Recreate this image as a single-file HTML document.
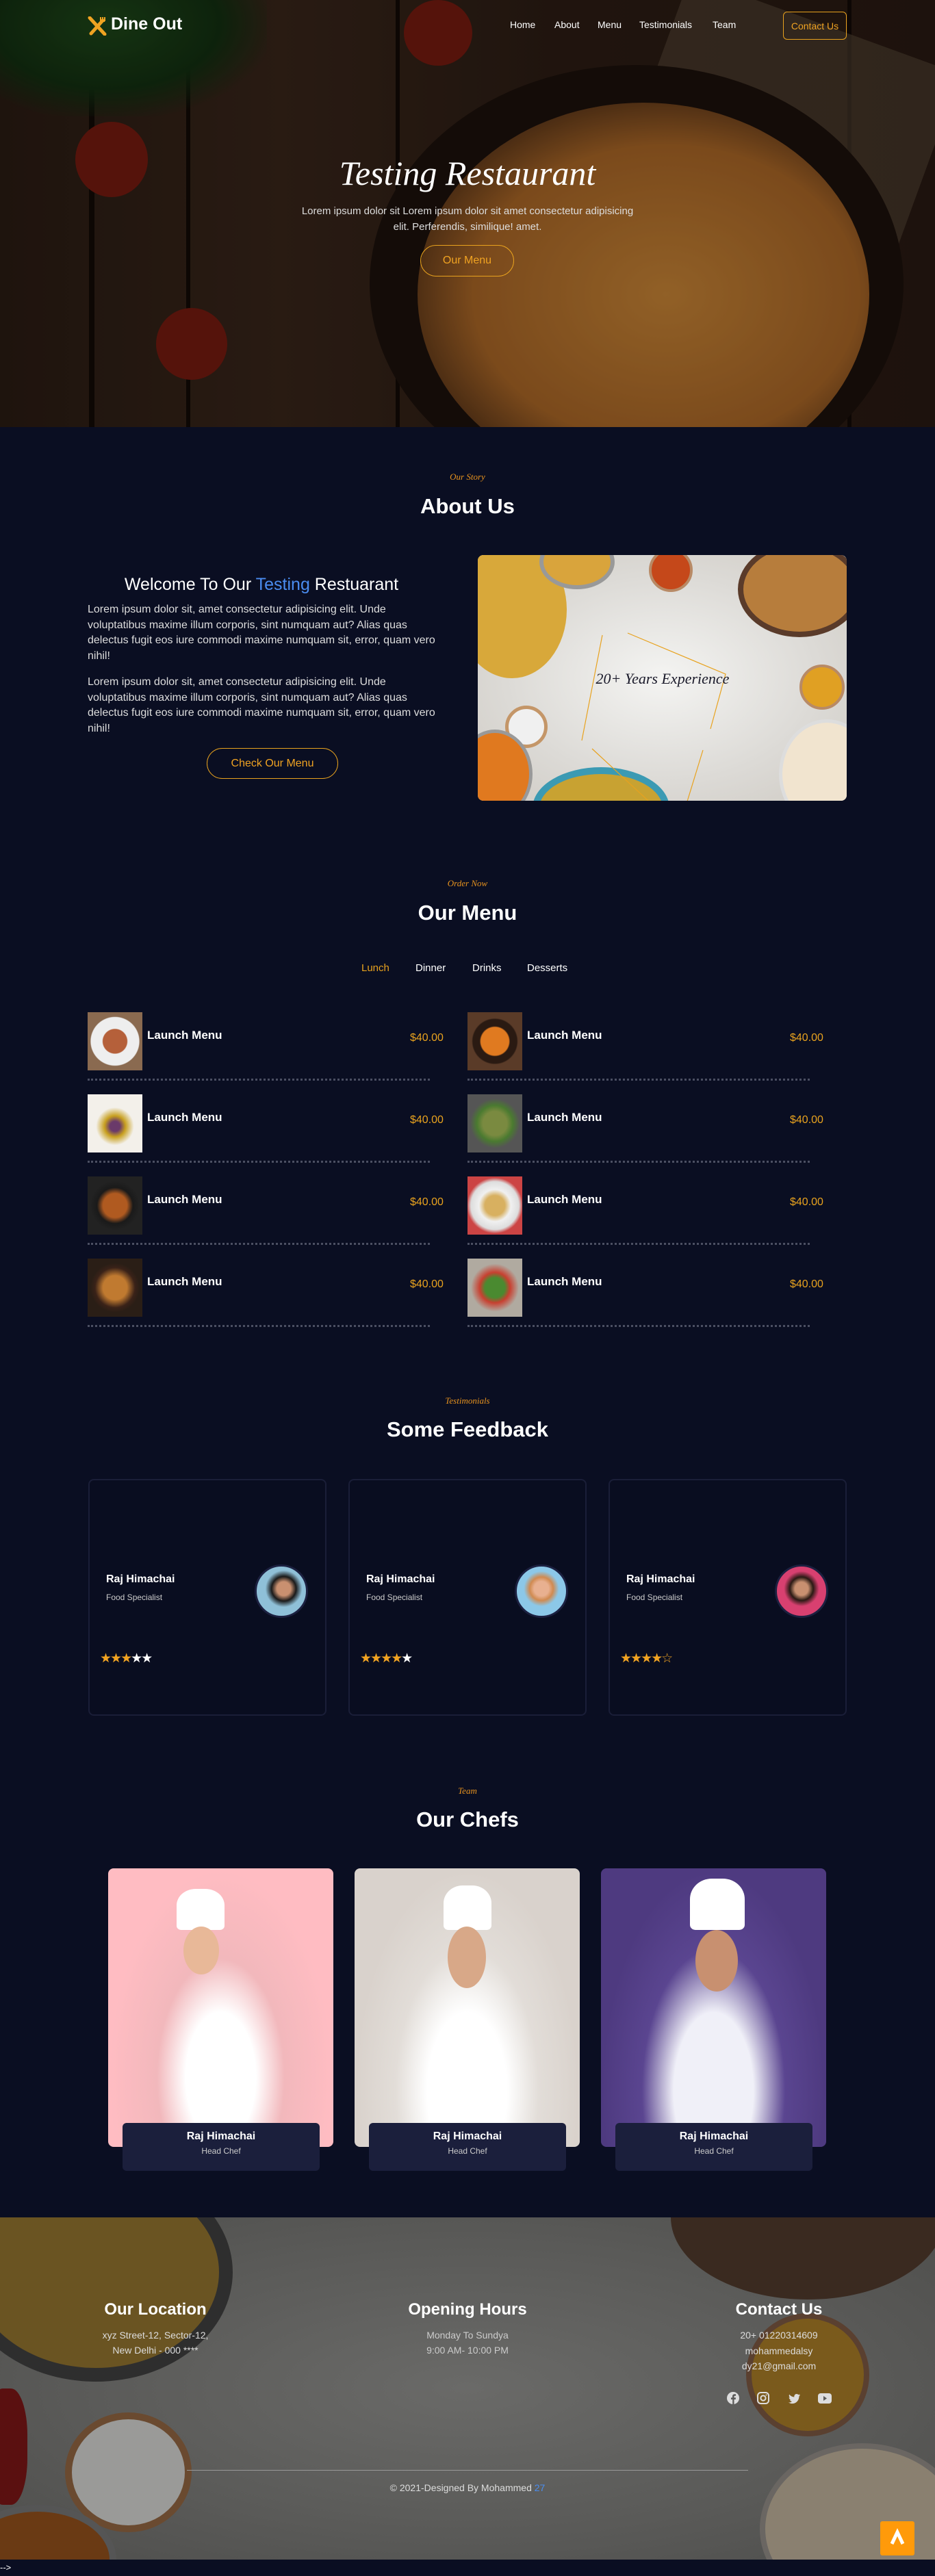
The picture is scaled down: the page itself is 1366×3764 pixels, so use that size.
<!DOCTYPE html>
<html><head><meta charset="utf-8"><style>
*{margin:0;padding:0;box-sizing:border-box}
body{width:1366px;height:3764px;background:#0a0e22;font-family:"Liberation Sans",sans-serif;color:#fff;position:relative;overflow:hidden}
.a{position:absolute}
.c{text-align:center}
.script{font-family:"Liberation Serif",serif;font-style:italic;color:#e8931e}
.h2{font-size:31px;font-weight:600;width:1366px;left:0;text-align:center}
.sub{font-size:13px;width:1366px;left:0;text-align:center}
.btn{border:1px solid #e8a21e;color:#f0a322;border-radius:24px;display:flex;align-items:center;justify-content:center}
.mi{width:80px;height:85px}
.mt{font-size:17px;font-weight:600}
.mp{font-size:16px;color:#e8a21e}
.dl{height:0;border-top:3px dotted #4b4f62;width:500px}
.card{width:348px;height:346px;border:2px solid #1a1e38;border-radius:8px;background:#090d20}
.av{width:78px;height:78px;border-radius:50%;border:3px solid #1c2040}
.st{font-size:19px;letter-spacing:-2px}
.chef{width:329px;height:407px;border-radius:8px;overflow:hidden}
.nb{width:288px;height:70px;background:#1b1f3c;border-radius:6px;text-align:center}
</style></head><body>

<!-- HERO -->
<div class="a" style="left:0;top:0;width:1366px;height:624px;background:linear-gradient(90deg,#2c1d14,#3b271b 30%,#2e1e15 60%,#2a1b13);overflow:hidden">
  <div class="a" style="left:130px;top:0;width:8px;height:624px;background:#130b07"></div>
  <div class="a" style="left:272px;top:0;width:6px;height:624px;background:#130b07"></div>
  <div class="a" style="left:578px;top:0;width:6px;height:624px;background:#130b07"></div>
  <div class="a" style="left:1238px;top:0;width:6px;height:624px;background:#130b07"></div>
  <div class="a" style="left:900px;top:20px;width:420px;height:560px;background:#5a4a38;transform:rotate(20deg);opacity:.6"></div>
  <div class="a" style="left:540px;top:95px;width:780px;height:640px;border-radius:50%;background:#1e120c"></div>
  <div class="a" style="left:610px;top:150px;width:660px;height:560px;border-radius:50%;background:radial-gradient(ellipse at 55% 50%,#d08a38,#b06a28 55%,#3a2214 85%)"></div>
  <div class="a" style="left:110px;top:178px;width:106px;height:110px;border-radius:50%;background:#7a1c10"></div>
  <div class="a" style="left:590px;top:0;width:100px;height:96px;border-radius:50%;background:#7a1c10"></div>
  <div class="a" style="left:228px;top:450px;width:104px;height:105px;border-radius:50%;background:#7a1c10"></div>
  <div class="a" style="left:0;top:0;width:390px;height:170px;background:radial-gradient(ellipse at 40% 20%,#1f4a1a,#143212 50%,transparent 75%)"></div>
</div>
<div class="a" style="left:0;top:0;width:1366px;height:624px;background:rgba(0,0,0,.3)"></div>

<svg class="a" style="left:128px;top:24px" width="28" height="28" viewBox="0 0 28 28"><path d="M3 2 L25 26" stroke="#f0a322" stroke-width="5" stroke-linecap="round"/><path d="M22 6 L5 25" stroke="#f0a322" stroke-width="5" stroke-linecap="round"/><path d="M19 1v6M22 1v6M25 1v6M19 7h6" stroke="#f0a322" stroke-width="2"/></svg>
<div class="a" style="left:162px;top:21px;font-size:25px;font-weight:700">Dine Out</div>
<div class="a" style="left:745px;top:28px;font-size:14px">Home</div>
<div class="a" style="left:810px;top:28px;font-size:14px">About</div>
<div class="a" style="left:873px;top:28px;font-size:14px">Menu</div>
<div class="a" style="left:934px;top:28px;font-size:14px">Testimonials</div>
<div class="a" style="left:1041px;top:28px;font-size:14px">Team</div>
<div class="a btn" style="left:1144px;top:17px;width:93px;height:41px;border-radius:6px;font-size:14px">Contact Us</div>

<div class="a c" style="left:0;top:224px;width:1366px;font-family:'Liberation Serif',serif;font-style:italic;font-size:50px">Testing Restaurant</div>
<div class="a c" style="left:403px;top:297px;width:560px;font-size:15px;line-height:23px;color:#ddd">Lorem ipsum dolor sit Lorem ipsum dolor sit amet consectetur adipisicing<br>elit. Perferendis, similique! amet.</div>
<div class="a btn" style="left:614px;top:358px;width:137px;height:46px;font-size:16px">Our Menu</div>

<!-- ABOUT -->
<div class="a script sub" style="top:689px">Our Story</div>
<div class="a h2" style="top:722px">About Us</div>
<div class="a c" style="left:128px;top:840px;width:508px;font-size:25px">Welcome To Our <span style="color:#4a8cf0">Testing</span> Restuarant</div>
<div class="a" style="left:128px;top:880px;width:510px;font-size:16px;line-height:22.6px;color:#ddd">Lorem ipsum dolor sit, amet consectetur adipisicing elit. Unde voluptatibus maxime illum corporis, sint numquam aut? Alias quas delectus fugit eos iure commodi maxime numquam sit, error, quam vero nihil!</div>
<div class="a" style="left:128px;top:986px;width:510px;font-size:16px;line-height:22.6px;color:#ddd">Lorem ipsum dolor sit, amet consectetur adipisicing elit. Unde voluptatibus maxime illum corporis, sint numquam aut? Alias quas delectus fugit eos iure commodi maxime numquam sit, error, quam vero nihil!</div>
<div class="a btn" style="left:302px;top:1093px;width:192px;height:45px;font-size:16px">Check Our Menu</div>
<div class="a" style="left:698px;top:811px;width:539px;height:359px;border-radius:8px;overflow:hidden;background:radial-gradient(ellipse at 50% 50%,#f4f4f2,#dcdad6 60%,#cfcbc4)">
  <div class="a" style="left:-30px;top:-20px;width:160px;height:200px;border-radius:50%;background:#d8a83a"></div>
  <div class="a" style="left:90px;top:-30px;width:110px;height:80px;border-radius:50%;background:#d9a43c;border:6px solid #999"></div>
  <div class="a" style="left:250px;top:-10px;width:64px;height:64px;border-radius:50%;background:#c5481a;border:4px solid #b88a66"></div>
  <div class="a" style="left:380px;top:-20px;width:180px;height:140px;border-radius:50%;background:#b77d3c;border:8px solid #5a3b2a"></div>
  <div class="a" style="left:470px;top:160px;width:66px;height:66px;border-radius:50%;background:#e0a023;border:4px solid #b88a66"></div>
  <div class="a" style="left:40px;top:220px;width:62px;height:62px;border-radius:50%;background:#f0f0f0;border:5px solid #c49668"></div>
  <div class="a" style="left:-30px;top:255px;width:110px;height:130px;border-radius:50%;background:#e0791f;border:5px solid #999"></div>
  <div class="a" style="left:80px;top:310px;width:200px;height:120px;border-radius:50%;background:#c8a232;border:10px solid #3b9ab3"></div>
  <div class="a" style="left:440px;top:240px;width:140px;height:160px;border-radius:50%;background:#f1e4cf;border:5px solid #ddd"></div>
  <svg class="a" style="left:0;top:0" width="539" height="359"><path d="M219 114 L362 174 L340 254 M329 285 L306 360 M276 384 L167 283 M152 271 L182 117" fill="none" stroke="#e8a21e" stroke-width="1.2"/></svg>
  <div class="a c" style="left:150px;top:168px;width:240px;font-family:'Liberation Serif',serif;font-style:italic;font-size:22px;color:#1a1a2a">20+ Years Experience</div>
</div>

<!-- MENU -->
<div class="a script sub" style="top:1283px">Order Now</div>
<div class="a h2" style="top:1316px">Our Menu</div>
<div class="a" style="left:528px;top:1406px;font-size:15px;color:#e8a21e">Lunch</div>
<div class="a" style="left:607px;top:1406px;font-size:15px">Dinner</div>
<div class="a" style="left:690px;top:1406px;font-size:15px">Drinks</div>
<div class="a" style="left:770px;top:1406px;font-size:15px">Desserts</div>

<div class="a mi" style="left:128px;top:1479px;background:radial-gradient(circle,#b5603a 30%,#eee 32%,#eee 60%,#8a6a50 62%)"></div>
<div class="a mi" style="left:683px;top:1479px;background:radial-gradient(circle,#e07a20 35%,#2a1a12 38%,#2a1a12 55%,#5a3b28 58%)"></div>
<div class="a mi" style="left:128px;top:1599px;background:radial-gradient(circle at 50% 55%,#6a3a6a 12%,#c8a020 25%,#f3f0ea 45%)"></div>
<div class="a mi" style="left:683px;top:1599px;background:radial-gradient(circle,#7a8a40 30%,#4a7a30 45%,#555 62%)"></div>
<div class="a mi" style="left:128px;top:1719px;background:radial-gradient(circle,#b05a20 30%,#1a1a1a 45%,#222 62%)"></div>
<div class="a mi" style="left:683px;top:1719px;background:radial-gradient(circle,#d8b060 25%,#f0f0f0 40%,#ddd 60%,#c44 70%)"></div>
<div class="a mi" style="left:128px;top:1839px;background:radial-gradient(circle,#c07a30 30%,#3a2218 50%,#2a1e16 62%)"></div>
<div class="a mi" style="left:683px;top:1839px;background:radial-gradient(circle,#4a8a30 25%,#c84030 38%,#b0aaa0 60%)"></div>

<div class="a mt" style="left:215px;top:1503px">Launch Menu</div><div class="a mp" style="left:599px;top:1508px">$40.00</div>
<div class="a mt" style="left:770px;top:1503px">Launch Menu</div><div class="a mp" style="left:1154px;top:1508px">$40.00</div>
<div class="a mt" style="left:215px;top:1623px">Launch Menu</div><div class="a mp" style="left:599px;top:1628px">$40.00</div>
<div class="a mt" style="left:770px;top:1623px">Launch Menu</div><div class="a mp" style="left:1154px;top:1628px">$40.00</div>
<div class="a mt" style="left:215px;top:1743px">Launch Menu</div><div class="a mp" style="left:599px;top:1748px">$40.00</div>
<div class="a mt" style="left:770px;top:1743px">Launch Menu</div><div class="a mp" style="left:1154px;top:1748px">$40.00</div>
<div class="a mt" style="left:215px;top:1863px">Launch Menu</div><div class="a mp" style="left:599px;top:1868px">$40.00</div>
<div class="a mt" style="left:770px;top:1863px">Launch Menu</div><div class="a mp" style="left:1154px;top:1868px">$40.00</div>

<div class="a dl" style="left:128px;top:1576px"></div><div class="a dl" style="left:683px;top:1576px"></div>
<div class="a dl" style="left:128px;top:1696px"></div><div class="a dl" style="left:683px;top:1696px"></div>
<div class="a dl" style="left:128px;top:1816px"></div><div class="a dl" style="left:683px;top:1816px"></div>
<div class="a dl" style="left:128px;top:1936px"></div><div class="a dl" style="left:683px;top:1936px"></div>

<!-- TESTIMONIALS -->
<div class="a script sub" style="top:2039px">Testimonials</div>
<div class="a h2" style="top:2071px">Some Feedback</div>

<div class="a card" style="left:129px;top:2161px"></div>
<div class="a card" style="left:509px;top:2161px"></div>
<div class="a card" style="left:889px;top:2161px"></div>

<div class="a" style="left:155px;top:2299px;font-size:16px;font-weight:600">Raj Himachai</div><div class="a" style="left:155px;top:2327px;font-size:12px;color:#ccc">Food Specialist</div>
<div class="a" style="left:535px;top:2299px;font-size:16px;font-weight:600">Raj Himachai</div><div class="a" style="left:535px;top:2327px;font-size:12px;color:#ccc">Food Specialist</div>
<div class="a" style="left:915px;top:2299px;font-size:16px;font-weight:600">Raj Himachai</div><div class="a" style="left:915px;top:2327px;font-size:12px;color:#ccc">Food Specialist</div>

<div class="a av" style="left:372px;top:2286px;background:radial-gradient(circle at 55% 45%,#c99070 18%,#1a1a1a 32%,#8fc0d8 48%)"></div>
<div class="a av" style="left:752px;top:2286px;background:radial-gradient(circle at 50% 45%,#e8b090 20%,#d08a50 32%,#8cc8e8 48%)"></div>
<div class="a av" style="left:1132px;top:2286px;background:radial-gradient(circle at 50% 45%,#c89070 18%,#2a1a14 32%,#d84070 48%)"></div>

<div class="a st" style="left:146px;top:2412px"><span style="color:#f0a322">★★★</span>★★</div>
<div class="a st" style="left:526px;top:2412px"><span style="color:#f0a322">★★★★</span>★</div>
<div class="a st" style="left:906px;top:2412px;color:#f0a322">★★★★☆</div>

<!-- CHEFS -->
<div class="a script sub" style="top:2609px">Team</div>
<div class="a h2" style="top:2641px">Our Chefs</div>

<div class="a chef" style="left:158px;top:2730px;background:radial-gradient(ellipse at 50% 75%,#fff 22%,#f2b8bc 40%,#ffbcc2 70%)"><div class="a" style="left:100px;top:30px;width:70px;height:60px;border-radius:40% 40% 10% 10%;background:#fff"></div><div class="a" style="left:110px;top:85px;width:52px;height:70px;border-radius:50%;background:#e8b898"></div></div>
<div class="a chef" style="left:518px;top:2730px;background:radial-gradient(ellipse at 50% 80%,#fff 25%,#e2ddd8 45%,#d9d2cc 70%)"><div class="a" style="left:130px;top:25px;width:70px;height:65px;border-radius:40% 40% 10% 10%;background:#fff"></div><div class="a" style="left:136px;top:85px;width:56px;height:90px;border-radius:50%;background:#d8a888"></div></div>
<div class="a chef" style="left:878px;top:2730px;background:radial-gradient(ellipse at 50% 80%,#f0f0f8 25%,#5a4590 45%,#4e3a80 70%)"><div class="a" style="left:130px;top:15px;width:80px;height:75px;border-radius:40% 40% 10% 10%;background:#fff"></div><div class="a" style="left:138px;top:90px;width:62px;height:90px;border-radius:50%;background:#c89070"></div></div>

<div class="a nb" style="left:179px;top:3102px"><div style="margin-top:11px;font-size:16px;font-weight:600">Raj Himachai</div><div style="margin-top:5px;font-size:12px;color:#ccc">Head Chef</div></div>
<div class="a nb" style="left:539px;top:3102px"><div style="margin-top:11px;font-size:16px;font-weight:600">Raj Himachai</div><div style="margin-top:5px;font-size:12px;color:#ccc">Head Chef</div></div>
<div class="a nb" style="left:899px;top:3102px"><div style="margin-top:11px;font-size:16px;font-weight:600">Raj Himachai</div><div style="margin-top:5px;font-size:12px;color:#ccc">Head Chef</div></div>

<!-- FOOTER -->
<div class="a" style="left:0;top:3240px;width:1366px;height:500px;background:radial-gradient(ellipse at 50% 50%,#6a6a68,#5a5a58 60%,#4e4e4c);overflow:hidden">
  <div class="a" style="left:-60px;top:-80px;width:400px;height:320px;border-radius:50%;background:#6a5422;border:20px solid #2e2e2e"></div>
  <div class="a" style="left:980px;top:-120px;width:400px;height:240px;border-radius:50%;background:#3a2a20"></div>
  <div class="a" style="left:1090px;top:140px;width:180px;height:180px;border-radius:50%;background:#7a5a1c;border:8px solid #5a4030"></div>
  <div class="a" style="left:95px;top:285px;width:185px;height:175px;border-radius:50%;background:#9a9a98;border:10px solid #6a4a30"></div>
  <div class="a" style="left:-20px;top:250px;width:60px;height:170px;border-radius:40%;background:#5a1010"></div>
  <div class="a" style="left:-60px;top:420px;width:230px;height:160px;border-radius:50%;background:#6a3a14;border:10px solid #555"></div>
  <div class="a" style="left:1110px;top:330px;width:300px;height:250px;border-radius:50%;background:#8a8070;border:8px solid #6a6662"></div>
</div>
<div class="a c" style="left:77px;top:3361px;width:300px;font-size:24px;font-weight:600">Our Location</div>
<div class="a c" style="left:77px;top:3401px;width:300px;font-size:14px;line-height:22px;color:#ddd">xyz Street-12, Sector-12,<br>New Delhi - 000 ****</div>
<div class="a c" style="left:533px;top:3361px;width:300px;font-size:24px;font-weight:600">Opening Hours</div>
<div class="a c" style="left:533px;top:3401px;width:300px;font-size:14px;line-height:22px;color:#ccc">Monday To Sundya<br>9:00 AM- 10:00 PM</div>
<div class="a c" style="left:988px;top:3361px;width:300px;font-size:24px;font-weight:600">Contact Us</div>
<div class="a c" style="left:988px;top:3401px;width:300px;font-size:14px;line-height:22.5px;color:#ddd">20+ 01220314609<br>mohammedalsy<br>dy21@gmail.com</div>

<svg class="a" style="left:1060px;top:3493px" width="160" height="22" viewBox="0 0 160 22" fill="#ddd">
  <circle cx="11" cy="11" r="9"/><path d="M12.5 20v-7h2.2l.3-2.6h-2.5V8.9c0-.7.2-1.2 1.3-1.2h1.3V5.4c-.3 0-1-.1-1.9-.1-1.9 0-3.2 1.2-3.2 3.3v1.8H8v2.6h2.2v7z" fill="#5a5a58"/>
  <rect x="47" y="3" width="16" height="16" rx="4.5" fill="none" stroke="#ddd" stroke-width="2"/><circle cx="55" cy="11" r="3.6" fill="none" stroke="#ddd" stroke-width="2"/><circle cx="59.5" cy="6.5" r="1"/>
  <path d="M109 6.5c-.6.3-1.3.5-2 .6.7-.4 1.3-1.1 1.5-1.9-.7.4-1.400.7-2.2.9-1.4-1.5-3.8-1.4-5.1.1-.8.9-1.1 2.2-.8 3.3-2.8-.1-5.4-1.5-7.2-3.7-.9 1.6-.4 3.6 1.1 4.6-.6 0-1.1-.2-1.6-.4 0 1.7 1.2 3.1 2.8 3.5-.5.1-1.1.2-1.6.1.5 1.4 1.8 2.4 3.3 2.4-1.5 1.2-3.4 1.7-5.3 1.5 1.6 1 3.5 1.6 5.4 1.6 6.5 0 10.1-5.4 10.1-10.1v-.5c.7-.5 1.3-1.1 1.6-1.9z"/>
  <rect x="135" y="4" width="20" height="15" rx="4"/><path d="M143 8v7l5-3.5z" fill="#5a5a58"/>
</svg>

<div class="a" style="left:273px;top:3609px;width:820px;height:1px;background:#999"></div>
<div class="a c" style="left:0;top:3627px;width:1366px;font-size:14px;color:#ddd">© 2021-Designed By Mohammed <span style="color:#4a8cf0">27</span></div>
<div class="a" style="left:1286px;top:3684px;width:50px;height:50px;background:#ff9a0a;border-radius:3px"><svg width="50" height="50"><path d="M17 33 L25 16 L33 33" fill="none" stroke="#fff" stroke-width="5"/></svg></div>
<div class="a" style="left:0;top:3740px;width:1366px;height:24px;background:#0a0e22;font-size:13px;padding:4px 0 0 0">--&gt;</div>
</body></html>
